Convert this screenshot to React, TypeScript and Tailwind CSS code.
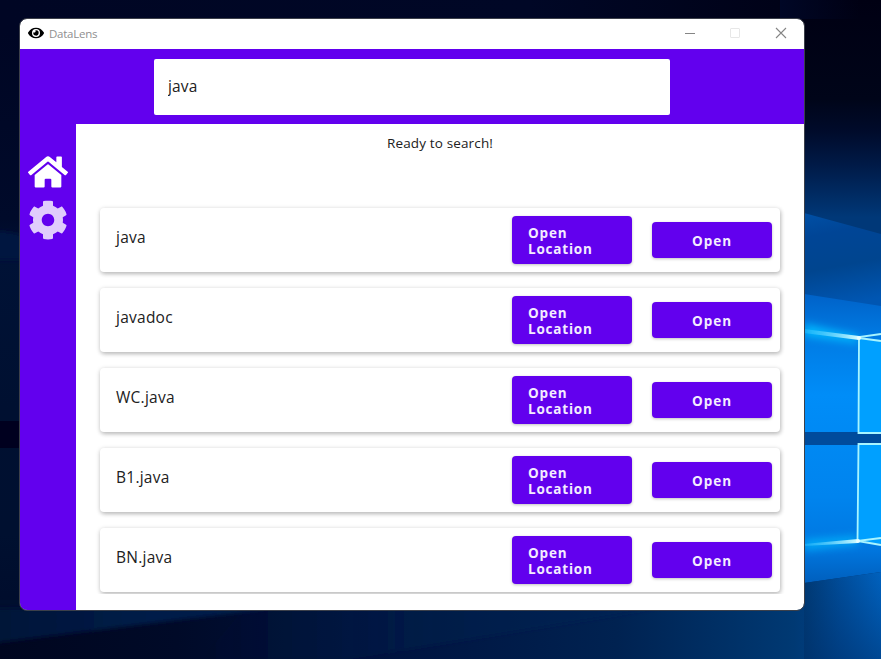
import { FaCog, FaEye, FaHome } from "react-icons/fa";

const files = ["java", "javadoc", "WC.java", "B1.java", "BN.java"];

function Wallpaper() {
  return (
    <svg className="absolute inset-0" width="881" height="659" viewBox="0 0 881 659" aria-hidden="true">
      <defs>
        <linearGradient id="top" x1="0" y1="0" x2="1" y2="0">
          <stop offset="0" stopColor="#000624" />
          <stop offset="0.6" stopColor="#000726" />
          <stop offset="1" stopColor="#000012" />
        </linearGradient>
        <linearGradient id="left" x1="0" y1="0" x2="0" y2="1">
          <stop offset="0" stopColor="#000624" />
          <stop offset="0.3" stopColor="#000a2a" />
          <stop offset="0.36" stopColor="#001236" />
          <stop offset="0.6" stopColor="#001031" />
          <stop offset="0.8" stopColor="#001030" />
          <stop offset="1" stopColor="#000a2a" />
        </linearGradient>
        <linearGradient id="right" x1="0" y1="0" x2="0" y2="1">
          <stop offset="0" stopColor="#000013" />
          <stop offset="0.15" stopColor="#000519" />
          <stop offset="0.2" stopColor="#000b2b" />
          <stop offset="0.25" stopColor="#001a47" />
          <stop offset="0.33" stopColor="#003878" />
          <stop offset="1" stopColor="#003878" />
        </linearGradient>
        <linearGradient id="rightFade" x1="0" y1="0" x2="1" y2="0">
          <stop offset="0" stopColor="#000726" />
          <stop offset="1" stopColor="#000726" stopOpacity="0" />
        </linearGradient>
        <linearGradient id="bottom" x1="0" y1="0" x2="1" y2="0">
          <stop offset="0" stopColor="#00061f" />
          <stop offset="0.2" stopColor="#000a28" />
          <stop offset="0.45" stopColor="#001440" />
          <stop offset="0.7" stopColor="#002251" />
          <stop offset="0.9" stopColor="#003973" />
          <stop offset="1" stopColor="#0049a0" />
        </linearGradient>
        <linearGradient id="corner" x1="0" y1="0" x2="1" y2="0">
          <stop offset="0" stopColor="#003973" />
          <stop offset="0.45" stopColor="#004c99" />
          <stop offset="1" stopColor="#0062bf" />
        </linearGradient>
        <linearGradient id="cornerFade" x1="0" y1="0" x2="0" y2="1">
          <stop offset="0" stopColor="#002e68" stopOpacity="0" />
          <stop offset="1" stopColor="#002e68" stopOpacity="0.5" />
        </linearGradient>
        <linearGradient id="beam" x1="0" y1="0" x2="0.15" y2="1">
          <stop offset="0" stopColor="#0050a6" />
          <stop offset="0.25" stopColor="#004596" />
          <stop offset="0.6" stopColor="#00458f" />
          <stop offset="1" stopColor="#0056b2" />
        </linearGradient>
        <linearGradient id="glow" x1="0" y1="0" x2="0" y2="1">
          <stop offset="0" stopColor="#0062c8" />
          <stop offset="0.15" stopColor="#007be4" />
          <stop offset="0.35" stopColor="#008df8" />
          <stop offset="0.7" stopColor="#0084ee" />
          <stop offset="0.88" stopColor="#0077e0" />
          <stop offset="1" stopColor="#005fbd" />
        </linearGradient>
        <linearGradient id="ray" x1="0" y1="0" x2="1" y2="0">
          <stop offset="0" stopColor="#35c6ff" stopOpacity="0.35" />
          <stop offset="1" stopColor="#d8ffff" />
        </linearGradient>
        <linearGradient id="streak" x1="0" y1="0" x2="1" y2="0">
          <stop offset="0" stopColor="#001438" />
          <stop offset="0.5" stopColor="#001c47" />
          <stop offset="1" stopColor="#00224f" />
        </linearGradient>
        <linearGradient id="haze" x1="0" y1="0" x2="1" y2="0">
          <stop offset="0" stopColor="#00204c" stopOpacity="0" />
          <stop offset="0.5" stopColor="#00204c" stopOpacity="0.5" />
          <stop offset="1" stopColor="#00285a" stopOpacity="0.5" />
        </linearGradient>
        <filter id="soft" x="-50%" y="-200%" width="200%" height="500%">
          <feGaussianBlur stdDeviation="4" />
        </filter>
        <filter id="edge" x="-10%" y="-50%" width="120%" height="200%">
          <feGaussianBlur stdDeviation="2" />
        </filter>
        <filter id="fine" x="-50%" y="-50%" width="200%" height="200%">
          <feGaussianBlur stdDeviation="0.6" />
        </filter>
      </defs>
      <rect width="881" height="659" fill="url(#top)" />
      <rect y="30" width="40" height="629" fill="url(#left)" />
      <path d="M-4 231Q10 231 24 236V260H-4Z" fill="#001641" filter="url(#edge)" />
      <rect y="421" width="20" height="27" fill="#00001f" />
      <rect x="780" width="101" height="659" fill="url(#right)" />
      <rect x="780" width="80" height="19" fill="url(#rightFade)" />
      <rect y="604" width="881" height="55" fill="url(#bottom)" />
      <rect y="600" width="20" height="20" fill="#000f2f" />
      <path d="M-4 608H275L130 626L-4 643Z" fill="url(#streak)" filter="url(#edge)" />
      <path d="M200 659H350L600 618L680 604H250Z" fill="url(#haze)" filter="url(#edge)" />
      <path d="M804 213L881 234V310H804Z" fill="url(#beam)" />
      <path d="M804 294L881 306V572L804 583Z" fill="url(#glow)" />
      <path d="M804 583L881 572V659H804Z" fill="url(#corner)" />
      <path d="M804 583L881 572V659H804Z" fill="url(#cornerFade)" />
      <path d="M804 324L858 336V343L804 336Z" fill="#00b9ff" filter="url(#soft)" />
      <path d="M804 540L858 536V544L804 550Z" fill="#00b9ff" opacity="0.8" filter="url(#soft)" />
      <path d="M858 338L881 340V433H858ZM858 444H881V544L858 541Z" fill="#00a0ff" />
      <path d="M804 432H881V445H804Z" fill="#004b9c" />
      <path d="M804 329L859 336V340L804 333ZM804 544L858 539V543L804 546Z" fill="url(#ray)" filter="url(#fine)" />
      <g fill="none" stroke="#a8f4ff" strokeWidth="1.8" filter="url(#fine)">
        <path d="M881 433H858.5L859 337L881 334M859 338L881 341M881 444H858.5L857.5 541L881 538M858 541L881 545" />
      </g>
      <circle cx="859" cy="338" r="2" fill="#e9ffff" filter="url(#fine)" />
      <circle cx="858" cy="541" r="2" fill="#e9ffff" filter="url(#fine)" />
    </svg>
  );
}

function TitleBar() {
  return (
    <div className="flex h-[30px] shrink-0 items-center bg-white pl-2">
      <FaEye className="mb-0.5 size-4 text-black" />
      <span className="ml-[5px] font-['Open_Sans',sans-serif] text-[11.5px] leading-4 tracking-[-0.25px] text-[#8f8f8f]">DataLens</span>
      <svg className="mr-[17px] mb-0.5 ml-auto" width="103" height="12" viewBox="0 0 103 12" fill="none">
        <path d="M1 6.5H11" stroke="#858585" />
        <rect x="46.5" y="1.5" width="9" height="9" rx="0.5" stroke="#e7e7e7" />
        <path d="M92 1L102 11M102 1L92 11" stroke="#858585" strokeWidth="1.1" />
      </svg>
    </div>
  );
}

function FileCard({ name }: { name: string }) {
  return (
    <li className="flex h-16 items-center rounded bg-white px-2 shadow-[1px_2px_4px_rgba(0,0,0,0.18),0_1px_5px_rgba(0,0,0,0.16)]">
      <span className="mb-1.5 flex-1 pl-2 text-[15.5px] leading-6 tracking-[0.25px]">{name}</span>
      <button className="mr-5 h-12 w-[120px] rounded bg-[#6200ee] px-4 pt-0.5 text-left text-[13.5px] leading-4 font-bold tracking-[0.8px] text-[#f4ecff] shadow-[0_1px_3px_rgba(0,0,0,0.25)]">
        Open Location
      </button>
      <button className="h-9 w-[120px] rounded bg-[#6200ee] pt-0.5 text-[13.5px] leading-4 font-bold tracking-[1px] text-[#f4ecff] shadow-[0_1px_3px_rgba(0,0,0,0.25)]">
        Open
      </button>
    </li>
  );
}

export default function App() {
  return (
    <div className="relative h-[659px] w-[881px] overflow-hidden pt-[19px] pl-5 font-['Open_Sans','Noto_Sans',sans-serif] text-[#212121]">
      <Wallpaper />
      <div className="relative flex h-[591px] w-[784px] flex-col overflow-hidden rounded-[7px] bg-white outline outline-[#3c404a]">
        <TitleBar />
        <header className="h-[75px] shrink-0 bg-[#6200ee] pt-2.5 pl-[134px]">
          <input
            className="block h-14 w-[516px] rounded-[2px] bg-white px-3.5 pb-0.5 text-[15.5px] tracking-[0.15px] outline-none"
            defaultValue="java"
            aria-label="Search"
          />
        </header>
        <div className="flex min-h-0 flex-1">
          <nav className="flex w-14 shrink-0 flex-col items-center gap-2 bg-[#6200ee] pt-7">
            <FaHome className="size-10 text-white" />
            <FaCog className="size-10 text-[#e0ccfc]" />
          </nav>
          <main className="flex flex-1 flex-col">
            <p className="pt-[9px] text-center text-[13.5px] leading-5 tracking-[0.15px]">Ready to search!</p>
            <ul className="mx-4 mt-[47px] flex h-[394px] flex-col gap-4 overflow-hidden px-2 pt-2">
              {files.map((name) => (
                <FileCard key={name} name={name} />
              ))}
            </ul>
          </main>
        </div>
      </div>
    </div>
  );
}
